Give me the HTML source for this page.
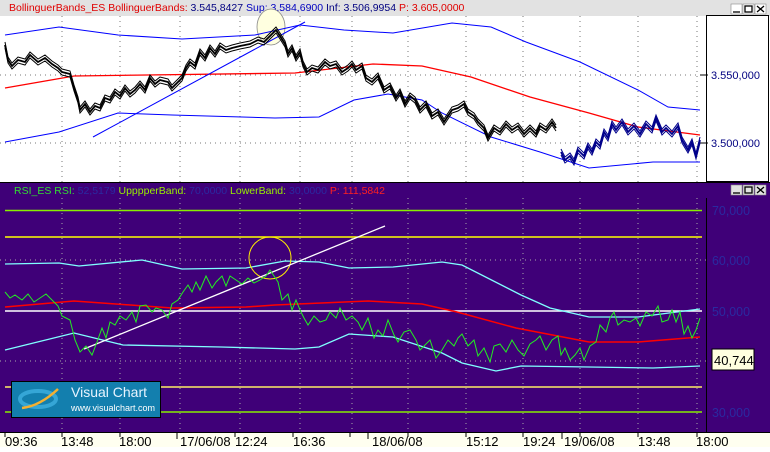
<!DOCTYPE html><html><head><style>
body{margin:0;width:770px;height:447px;overflow:hidden;background:#fff;font-family:"Liberation Sans",sans-serif}
</style></head><body>
<svg width="770" height="447" xmlns="http://www.w3.org/2000/svg" font-family="Liberation Sans, sans-serif">
<defs>
<polyline id="pb" fill="none" points="5,45 8,60 12,66 18,60 25,62 30,55 38,62 45,58 52,64 58,68 62,72 70,74 74,88 78,100 80,110 85,104 90,112 95,106 100,108 105,98 110,100 115,92 120,96 125,88 130,94 135,90 140,84 145,90 150,78 155,84 160,80 168,82 172,88 178,82 182,78 186,68 190,62 195,66 200,52 205,58 210,48 215,54 220,46 226,50 232,48 240,46 250,44 258,40 264,42 270,36 276,30 280,36 285,44 288,54 292,48 296,58 300,52 303,64 307,72 312,68 318,70 325,62 330,66 336,64 342,72 348,68 352,64 356,70 362,66 366,78 372,82 378,76 384,90 390,86 396,98 400,92 405,104 410,96 415,100 420,110 426,104 432,116 438,112 444,122 448,116 452,110 458,108 464,104 468,112 474,116 478,122 484,128 488,138 494,128 500,132 506,124 512,130 518,126 524,134 530,128 536,134 540,126 546,130 552,122 556,128"/>
<polyline id="pn" fill="none" points="561,152 565,160 570,156 574,162 578,150 584,156 588,146 592,152 596,142 600,146 604,132 608,138 612,124 616,130 622,122 628,132 634,126 640,134 646,124 652,130 656,118 662,132 666,128 672,134 678,126 682,140 688,150 692,142 696,156 700,140"/>
</defs>
<rect x="0" y="0" width="770" height="16" fill="#e2e2e2"/>
<text x="9" y="11" font-size="10.5" fill="#e00000">BollinguerBands_ES BollinguerBands:<tspan fill="#000080"> 3.545,8427 </tspan><tspan fill="#0000c0">Sup: 3.584,6900 </tspan><tspan fill="#000080">Inf: 3.506,9954 </tspan>P: 3.605,0000</text>
<g fill="#fff" stroke="#888" stroke-width="0.6"><rect x="731" y="4" width="11" height="10"/><rect x="743" y="4" width="11" height="10"/><rect x="755" y="4" width="11" height="10"/></g>
<g stroke="#000" stroke-width="1.3" fill="none"><line x1="733" y1="12" x2="740" y2="12"/><rect x="745" y="6" width="7" height="6"/><path d="M757 6 L764 12 M764 6 L757 12"/></g>
<rect x="0" y="16" width="706" height="166" fill="#fff"/>
<rect x="706.5" y="15.5" width="62" height="166" fill="#fff" stroke="#000"/>
<g stroke="#777" stroke-dasharray="1,4" stroke-width="1">
<line x1="0" y1="75" x2="706" y2="75"/><line x1="0" y1="143" x2="706" y2="143"/>
<line x1="62" y1="16" x2="62" y2="182"/><line x1="120" y1="16" x2="120" y2="182"/><line x1="180" y1="16" x2="180" y2="182"/><line x1="240" y1="16" x2="240" y2="182"/><line x1="300" y1="16" x2="300" y2="182"/><line x1="352" y1="16" x2="352" y2="182"/><line x1="408" y1="16" x2="408" y2="182"/><line x1="466" y1="16" x2="466" y2="182"/><line x1="523" y1="16" x2="523" y2="182"/><line x1="580" y1="16" x2="580" y2="182"/><line x1="638" y1="16" x2="638" y2="182"/><line x1="697" y1="16" x2="697" y2="182"/>
</g>
<g font-size="11" fill="#000080"><text x="711" y="79">3.550,000</text><text x="711" y="147">3.500,000</text></g>
<line x1="700" y1="75" x2="708" y2="75" stroke="#000"/><line x1="700" y1="143" x2="708" y2="143" stroke="#000"/>
<ellipse cx="271" cy="27" rx="14" ry="18" fill="#ffffe0" stroke="#888" stroke-width="0.8"/>
<polyline fill="none" stroke="#0000ff" stroke-width="1" points="5,35 59,27 118,35 182,39 255,35 300,25 344,30 393,33 452,23 491,27 526,42 580,62 638,90 668,107 700,110"/>
<polyline fill="none" stroke="#ff0000" stroke-width="1.3" points="5,88 74,76 147,75 295,73 373,64 422,66 471,77 530,97 589,113 638,127 700,135"/>
<polyline fill="none" stroke="#0000ff" stroke-width="1" points="5,142 59,132 118,113 172,115 275,118 319,117 354,100 388,94 422,100 442,113 491,137 540,152 589,168 653,162 700,162"/>
<line x1="93" y1="137" x2="305" y2="22" stroke="#0000ff" stroke-width="1"/>
<use href="#pb" stroke="#000" stroke-width="1.8"/>
<use href="#pb" stroke="#000" stroke-width="1" transform="translate(0,3)"/>
<use href="#pb" stroke="#000" stroke-width="1" transform="translate(0,-3)"/>
<use href="#pn" stroke="#00008b" stroke-width="1.8"/>
<use href="#pn" stroke="#00008b" stroke-width="1" transform="translate(0,3)"/>
<use href="#pn" stroke="#00008b" stroke-width="1" transform="translate(0,-3)"/>
<rect x="0" y="182" width="770" height="250" fill="#3f0078"/>
<line x1="0" y1="182.5" x2="770" y2="182.5" stroke="#000"/>
<text x="14" y="194" font-size="10.5" fill="#33dd33">RSI_ES RSI:<tspan fill="#2a2aa0"> 52,5179 </tspan><tspan fill="#99ee00">UpppperBand:</tspan><tspan fill="#2a2aa0"> 70,0000 </tspan><tspan fill="#99ee00">LowerBand:</tspan><tspan fill="#2a2aa0"> 30,0000 </tspan><tspan fill="#ff2020">P: 111,5842</tspan></text>
<g fill="#e2e2e2" stroke="#888" stroke-width="0.6"><rect x="731" y="185" width="11" height="10"/><rect x="743" y="185" width="11" height="10"/><rect x="755" y="185" width="11" height="10"/></g>
<g stroke="#000" stroke-width="1.3" fill="none"><line x1="733" y1="193" x2="740" y2="193"/><rect x="745" y="187" width="7" height="6"/><path d="M757 187 L764 193 M764 187 L757 193"/></g>
<line x1="706.5" y1="198" x2="706.5" y2="432" stroke="#000"/>
<g stroke="#aaa" stroke-dasharray="1,4"><line x1="0" y1="260" x2="706" y2="260"/><line x1="0" y1="361" x2="706" y2="361"/>
<line x1="62" y1="198" x2="62" y2="432"/><line x1="120" y1="198" x2="120" y2="432"/><line x1="180" y1="198" x2="180" y2="432"/><line x1="240" y1="198" x2="240" y2="432"/><line x1="300" y1="198" x2="300" y2="432"/><line x1="352" y1="198" x2="352" y2="432"/><line x1="408" y1="198" x2="408" y2="432"/><line x1="466" y1="198" x2="466" y2="432"/><line x1="523" y1="198" x2="523" y2="432"/><line x1="580" y1="198" x2="580" y2="432"/><line x1="638" y1="198" x2="638" y2="432"/><line x1="697" y1="198" x2="697" y2="432"/></g>
<line x1="5" y1="210.5" x2="702" y2="210.5" stroke="#88ee00" stroke-width="1.5"/>
<line x1="5" y1="237" x2="702" y2="237" stroke="#ffff00" stroke-width="1.5"/>
<line x1="5" y1="311" x2="702" y2="311" stroke="#fff" stroke-width="1.5"/>
<line x1="5" y1="387" x2="702" y2="387" stroke="#ffee66" stroke-width="1.5"/>
<line x1="5" y1="412" x2="702" y2="412" stroke="#88ee00" stroke-width="1.5"/>
<g font-size="13" fill="#2a2aa0"><text x="712" y="215" textLength="38" lengthAdjust="spacingAndGlyphs">70,000</text><text x="712" y="265" textLength="38" lengthAdjust="spacingAndGlyphs">60,000</text><text x="712" y="316" textLength="38" lengthAdjust="spacingAndGlyphs">50,000</text><text x="712" y="417" textLength="38" lengthAdjust="spacingAndGlyphs">30,000</text></g>
<rect x="712" y="349" width="42" height="21" fill="#ffffe0" stroke="#000"/>
<text x="714" y="365" font-size="13" fill="#000">40,744</text>
<polyline fill="none" stroke="#80ffff" stroke-width="1.3" points="5,264 59,263 79,266 142,260 182,269 246,268 285,261 319,262 349,268 393,267 442,262 462,265 521,295 550,308 589,317 638,317 700,309"/>
<polyline fill="none" stroke="#80ffff" stroke-width="1.3" points="5,350 74,333 123,345 221,347 295,349 319,347 349,334 393,337 442,353 462,363 496,371 521,366 589,367 653,368 700,366"/>
<polyline fill="none" stroke="#ff0000" stroke-width="1.5" points="5,307 74,301 172,308 246,307 275,305 368,301 422,304 457,312 516,328 589,342 638,342 700,337"/>
<circle cx="270" cy="258" r="21" fill="none" stroke="#ffee00" stroke-width="1"/>
<line x1="84" y1="349" x2="385" y2="226" stroke="#fff" stroke-width="1.3"/>
<polyline fill="none" stroke="#22ee22" stroke-width="1" points="5,292 10,298 15,295 22,300 28,294 34,302 40,298 46,294 52,300 58,306 62,316 70,320 75,340 80,352 86,346 92,355 97,342 102,328 106,338 110,322 115,325 120,316 126,320 132,312 136,322 140,306 146,305 152,312 156,308 162,310 168,318 172,304 178,300 183,292 188,285 192,292 196,282 200,290 206,276 212,288 216,282 222,276 226,286 230,276 236,280 242,284 248,278 254,283 260,280 266,276 270,270 274,276 278,282 282,300 288,294 292,310 296,300 300,310 304,318 308,325 314,316 320,322 326,320 330,312 336,318 340,308 346,320 352,316 358,322 362,330 368,318 374,338 378,330 383,336 388,320 394,335 398,342 404,332 410,330 416,340 420,350 426,344 430,340 436,358 442,350 448,340 454,346 458,338 462,334 468,346 474,340 478,356 484,348 490,362 494,346 500,344 506,352 512,340 518,350 524,356 530,344 536,340 540,336 546,350 552,340 558,336 561,355 565,348 570,360 575,355 580,348 584,360 590,346 596,342 600,325 606,332 610,318 614,312 618,325 624,320 630,322 636,318 640,326 646,312 652,316 658,306 662,322 668,320 672,310 676,322 680,312 684,334 688,326 692,338 696,330 700,318"/>
<rect x="11.5" y="381.5" width="149" height="36" fill="#137fae" stroke="#000"/>
<ellipse cx="38" cy="399" rx="18" ry="8" fill="none" stroke="#3fb0e0" stroke-width="4" opacity="0.8"/>
<path d="M22 408 Q40 406 58 389" stroke="#f4b030" stroke-width="2.5" fill="none"/>
<text x="71" y="397" font-size="14" fill="#e8f4ff">Visual Chart</text>
<text x="71" y="411" font-size="9" fill="#fff">www.visualchart.com</text>
<rect x="0" y="432" width="770" height="15" fill="#fffff0"/>
<line x1="0" y1="432.5" x2="770" y2="432.5" stroke="#000"/>
<g stroke="#000"><line x1="5" y1="433" x2="5" y2="437"/><line x1="62" y1="433" x2="62" y2="437"/><line x1="120" y1="433" x2="120" y2="437"/><line x1="177" y1="433" x2="177" y2="439"/><line x1="235" y1="433" x2="235" y2="437"/><line x1="293" y1="433" x2="293" y2="437"/><line x1="350" y1="433" x2="350" y2="437"/><line x1="368" y1="433" x2="368" y2="439"/><line x1="408" y1="433" x2="408" y2="437"/><line x1="466" y1="433" x2="466" y2="437"/><line x1="523" y1="433" x2="523" y2="437"/><line x1="562" y1="433" x2="562" y2="439"/><line x1="580" y1="433" x2="580" y2="437"/><line x1="638" y1="433" x2="638" y2="437"/><line x1="697" y1="433" x2="697" y2="437"/></g>
<g font-size="13" fill="#000"><text x="5" y="446">09:36</text><text x="61" y="446">13:48</text><text x="119" y="446">18:00</text><text x="180" y="446">17/06/08</text><text x="235" y="446">12:24</text><text x="293" y="446">16:36</text><text x="372" y="446">18/06/08</text><text x="466" y="446">15:12</text><text x="523" y="446">19:24</text><text x="564" y="446">19/06/08</text><text x="638" y="446">13:48</text><text x="696" y="446">18:00</text></g>
</svg>
</body></html>
